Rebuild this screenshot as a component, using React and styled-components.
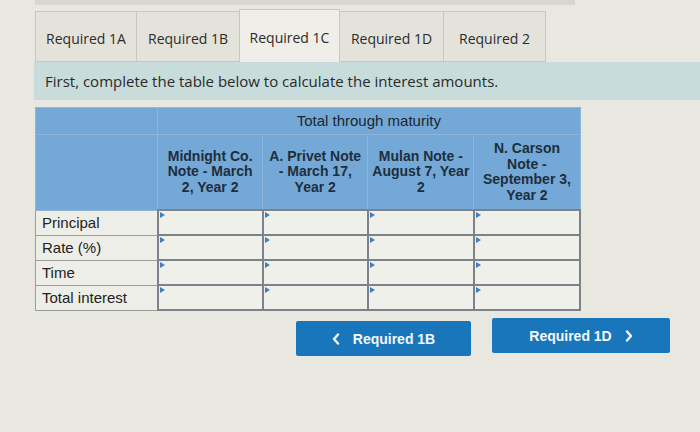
import React from "react";
import styled, { createGlobalStyle } from "styled-components";

const GlobalStyle = createGlobalStyle`
  html, body {
    margin: 0;
    padding: 0;
    background: #e9e8e0;
  }
  body {
    font-family: "Open Sans", "DejaVu Sans", sans-serif;
    width: 700px;
    height: 432px;
    overflow: hidden;
  }
`;

const tabs = [
  { label: "Required 1A", width: 102 },
  { label: "Required 1B", width: 104 },
  { label: "Required 1C", width: 101 },
  { label: "Required 1D", width: 105 },
  { label: "Required 2", width: 103 },
];
const notes = [
  ["Midnight Co.", "Note - March", "2, Year 2"],
  ["A. Privet Note", "- March 17,", "Year 2"],
  ["Mulan Note -", "August 7, Year", "2"],
  ["N. Carson", "Note -", "September 3,", "Year 2"],
];
const rows = ["Principal", "Rate (%)", "Time", "Total interest"];

const ChevronIcon = ({ dir }) => (
  <svg width="8" height="12" viewBox="0 0 8 12">
    <polyline
      points={dir === "left" ? "6,1.5 2,6 6,10.5" : "2,1.5 6,6 2,10.5"}
      fill="none"
      stroke="currentColor"
      strokeWidth="2.4"
      strokeLinecap="round"
      strokeLinejoin="round"
    />
  </svg>
);

const App = () => {
  return (
    <Page>
      <GlobalStyle />
      <TopStrip />
      <TabBar>
        {tabs.map((t) => (
          <Tab key={t.label} width={t.width} active={t.label === "Required 1C"}>
            {t.label}
          </Tab>
        ))}
      </TabBar>
      <Info>First, complete the table below to calculate the interest amounts.</Info>
      <Table>
        <colgroup>
          <col style={{ width: 122 }} />
          <col style={{ width: 105 }} />
          <col style={{ width: 105 }} />
          <col style={{ width: 106 }} />
          <col style={{ width: 106 }} />
        </colgroup>
        <thead>
          <tr>
            <HeadCell />
            <HeadCell colSpan={4} className="group">
              Total through maturity
            </HeadCell>
          </tr>
          <tr>
            <HeadCell className="tall" />
            {notes.map((n, i) => (
              <HeadCell key={i} className="tall">
                {n.map((line, j) => (
                  <div key={j}>{line}</div>
                ))}
              </HeadCell>
            ))}
          </tr>
        </thead>
        <tbody>
          {rows.map((r) => (
            <tr key={r}>
              <LabelCell>{r}</LabelCell>
              {notes.map((_, i) => (
                <InputCell key={i}>
                  <Marker />
                </InputCell>
              ))}
            </tr>
          ))}
        </tbody>
      </Table>
      <Buttons>
        <NavButton width={175}>
          <ChevronIcon dir="left" />
          <span>Required 1B</span>
        </NavButton>
        <NavButton width={178} raised>
          <span>Required 1D</span>
          <ChevronIcon dir="right" />
        </NavButton>
      </Buttons>
    </Page>
  );
};

const Page = styled.div`
  width: 700px;
  height: 432px;
  display: flex;
  flex-direction: column;
`;

const TopStrip = styled.div`
  height: 5px;
  width: 540px;
  margin-left: 35px;
  background: #d7d6cf;
`;

const TabBar = styled.div`
  display: flex;
  align-items: flex-end;
  padding-left: 35px;
  height: 57px;
`;

const Tab = styled.div`
  width: ${(p) => p.width}px;
  box-sizing: border-box;
  height: ${(p) => (p.active ? "53px" : "51px")};
  display: flex;
  align-items: center;
  justify-content: center;
  font-size: 14px;
  color: #2b2b2b;
  background: ${(p) => (p.active ? "#efeee8" : "#e4e3db")};
  border: 1px solid #c9c8c0;
  border-bottom: ${(p) => (p.active ? "none" : "1px solid #c9c8c0")};
  margin-right: -1px;
  padding-top: 3px;
  white-space: nowrap;
`;

const Info = styled.div`
  margin-left: 34px;
  height: 38px;
  background: #c7dcdb;
  display: flex;
  align-items: center;
  padding-left: 11px;
  box-sizing: border-box;
  font-size: 15px;
  color: #2a2a2a;
`;

const Table = styled.table`
  margin: 7px 0 0 35px;
  width: 546px;
  border-collapse: collapse;
  table-layout: fixed;
  font-family: "Liberation Sans", Arial, sans-serif;
`;

const HeadCell = styled.th`
  background: #74a8d6;
  color: #1e2e3c;
  font-size: 14px;
  font-weight: bold;
  line-height: 15.5px;
  text-align: center;
  vertical-align: middle;
  padding: 0 2px;
  border: 1px solid #8fb6da;
  height: 26px;

  &.group {
    font-weight: normal;
    font-size: 15px;
    color: #1c2630;
  }

  &.tall {
    height: 74px;
  }
`;

const LabelCell = styled.td`
  background: #eeeee8;
  color: #222;
  font-size: 15px;
  height: 24px;
  padding: 0 0 0 6px;
  border: 1px solid #9c9c98;
`;

const InputCell = styled.td`
  position: relative;
  background: #f0f0ea;
  border: 2px solid #7d8288;
  height: 22px;
  padding: 0;
`;

const Marker = styled.span`
  position: absolute;
  top: 1px;
  left: 1px;
  width: 0;
  height: 0;
  border-top: 3px solid transparent;
  border-bottom: 3px solid transparent;
  border-left: 5px solid #3f7fbf;
`;

const Buttons = styled.div`
  display: flex;
  gap: 21px;
  margin: 10px 0 0 296px;
`;

const NavButton = styled.div`
  width: ${(p) => p.width}px;
  height: 35px;
  margin-top: ${(p) => (p.raised ? "-3px" : "0")};
  background: #1a76bb;
  border-radius: 2px;
  color: #f4f8fb;
  font-family: "Liberation Sans", Arial, sans-serif;
  font-weight: bold;
  font-size: 14px;
  display: flex;
  align-items: center;
  justify-content: center;
  gap: 13px;
`;

export default App;
